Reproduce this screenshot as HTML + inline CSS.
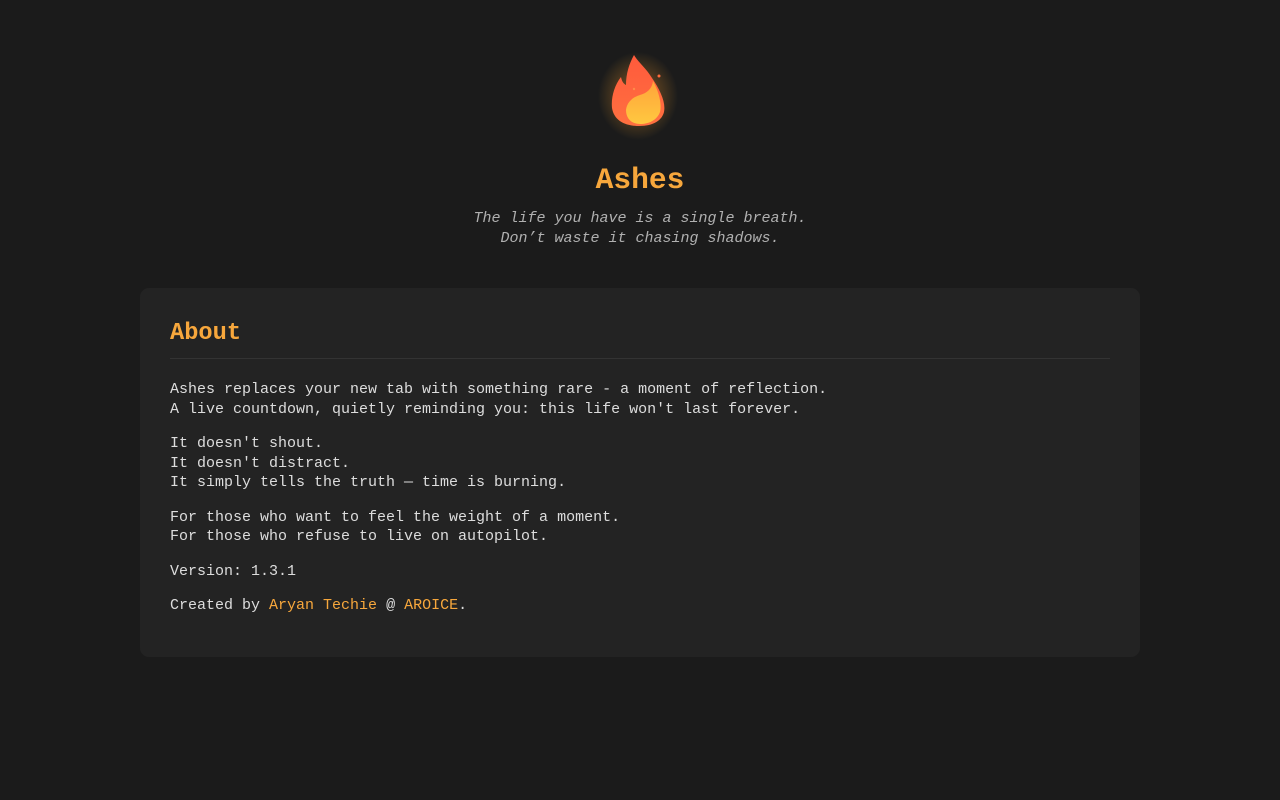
<!DOCTYPE html>
<html><head><meta charset="utf-8"><style>
html,body{margin:0;background:#1b1b1b;}
body{font-family:"Liberation Mono",monospace;color:#ddd;width:1280px;height:800px;position:relative;overflow:hidden}
.flame{position:absolute;left:598px;top:40px;width:80px;height:100px}
h1{position:absolute;top:160px;left:0;width:1280px;text-align:center;margin:0;font-size:29.6px;color:#f7a73c;font-weight:bold;line-height:40px}
.sub{position:absolute;top:209px;left:0;width:1280px;text-align:center;font-style:italic;font-size:15px;line-height:19.5px;color:#b0b0b0}
.card{position:absolute;left:140px;top:288px;width:1000px;height:369px;background:#232323;border-radius:9px}
h2{position:absolute;left:30px;top:30px;margin:0;font-size:23.7px;color:#f7a73c;font-weight:bold;line-height:32px}
.hr{position:absolute;left:30px;top:70px;width:940px;height:1px;background:#333}
.txt{position:absolute;left:30px;top:92px;font-size:15px;line-height:19.5px;color:#ddd;white-space:pre}
.txt p{margin:0 0 15px}
a{color:#f7a73c;text-decoration:none}
</style></head><body>
<svg class="flame" viewBox="0 0 80 100">
<defs>
<radialGradient id="g" cx="50%" cy="50%" r="50%"><stop offset="0" stop-color="#ffb02e" stop-opacity=".5"/><stop offset=".6" stop-color="#ffa02e" stop-opacity=".2"/><stop offset="1" stop-color="#ffb02e" stop-opacity="0"/></radialGradient>
<linearGradient id="o" x1="0" y1="0" x2="0" y2="1"><stop offset="0" stop-color="#ff5a3c"/><stop offset="1" stop-color="#ff7040"/></linearGradient>
<linearGradient id="y" x1="0" y1="0" x2="0" y2="1"><stop offset="0" stop-color="#ffa33a"/><stop offset="1" stop-color="#ffc840"/></linearGradient>
</defs>
<ellipse cx="40" cy="56" rx="40" ry="44" fill="url(#g)"/>
<path d="M36 15 C40 22 48 28 54 38 C62 50 68 62 66 72 C64 80 56 86 41 86 C26 86 16 80 14 68 C13 58 16 46 23 37 C24 42 26 44 28 45 C28 34 31 24 36 15Z" fill="url(#o)"/>
<path d="M55 41 C61 52 64 64 62 72 C59 80 51 84 42 84 C33 84 28 78 28 70 C29 62 35 57 42 55 C49 53 54 49 55 41Z" fill="url(#y)"/>
<circle cx="61" cy="36" r="1.5" fill="#ff6a3a"/>
<circle cx="36" cy="49" r="1.2" fill="#ff8a4a"/>
</svg>
<h1>Ashes</h1>
<div class="sub">The life you have is a single breath.<br>Don’t waste it chasing shadows.</div>
<div class="card">
<h2>About</h2>
<div class="hr"></div>
<div class="txt"><p>Ashes replaces your new tab with something rare - a moment of reflection.
A live countdown, quietly reminding you: this life won't last forever.</p><p>It doesn't shout.
It doesn't distract.
It simply tells the truth — time is burning.</p><p>For those who want to feel the weight of a moment.
For those who refuse to live on autopilot.</p><p>Version: 1.3.1</p><p>Created by <a>Aryan Techie</a> @ <a>AROICE</a>.</p></div>
</div>
</body></html>
